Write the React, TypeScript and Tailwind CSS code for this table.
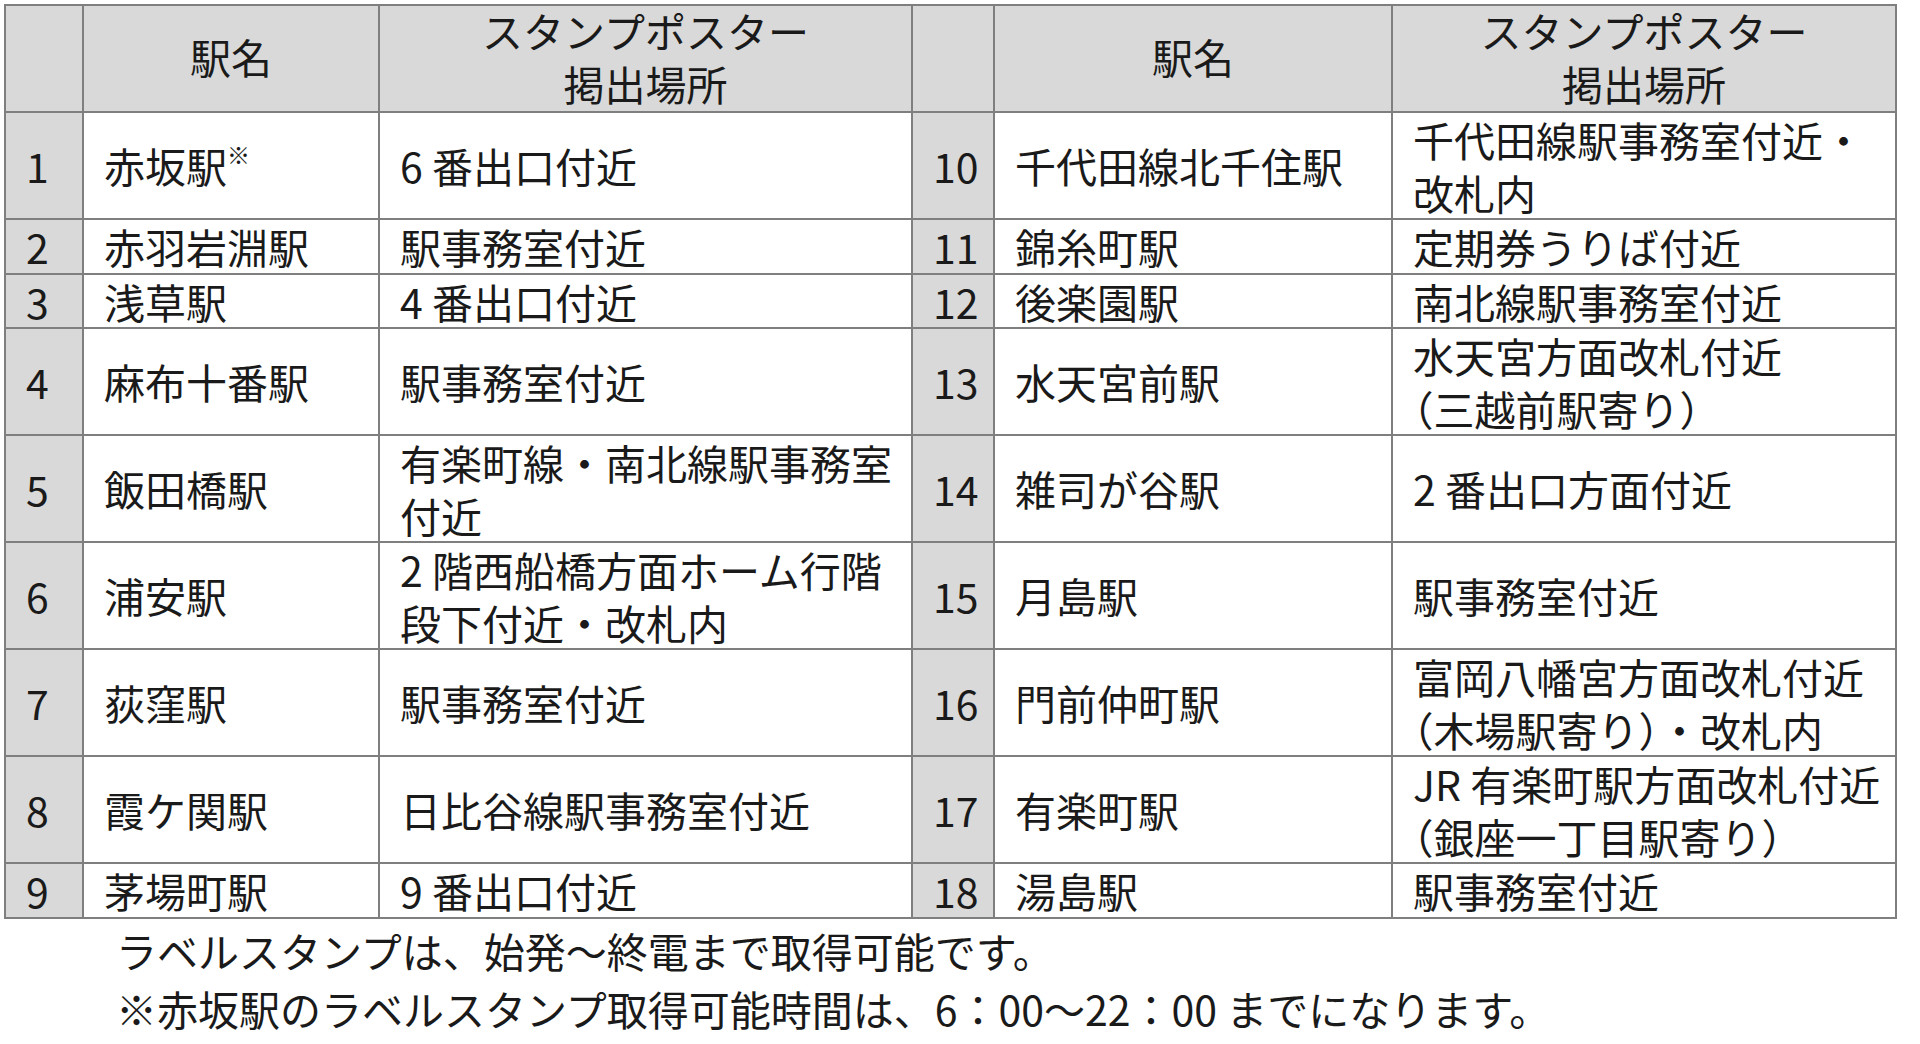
import React from "react";

type Row = {
  n: string;
  name: React.ReactNode;
  place: React.ReactNode;
};

const H = ({ c }: { c: string }) => (
  <span className="[font-feature-settings:'halt']">{c}</span>
);

const left: Row[] = [
  {
    n: "1",
    name: (
      <>
        赤坂駅
        <span className="text-[23px] leading-none align-[19px]">※</span>
      </>
    ),
    place: "6 番出口付近",
  },
  { n: "2", name: "赤羽岩淵駅", place: "駅事務室付近" },
  { n: "3", name: "浅草駅", place: "4 番出口付近" },
  { n: "4", name: "麻布十番駅", place: "駅事務室付近" },
  {
    n: "5",
    name: "飯田橋駅",
    place: (
      <>
        有楽町線・南北線駅事務室
        <br />
        付近
      </>
    ),
  },
  {
    n: "6",
    name: "浦安駅",
    place: (
      <>
        2 階西船橋方面ホーム行階
        <br />
        段下付近・改札内
      </>
    ),
  },
  { n: "7", name: "荻窪駅", place: "駅事務室付近" },
  { n: "8", name: "霞ケ関駅", place: "日比谷線駅事務室付近" },
  { n: "9", name: "茅場町駅", place: "9 番出口付近" },
];

const right: Row[] = [
  {
    n: "10",
    name: "千代田線北千住駅",
    place: (
      <>
        千代田線駅事務室付近・
        <br />
        改札内
      </>
    ),
  },
  { n: "11", name: "錦糸町駅", place: "定期券うりば付近" },
  { n: "12", name: "後楽園駅", place: "南北線駅事務室付近" },
  {
    n: "13",
    name: "水天宮前駅",
    place: (
      <>
        水天宮方面改札付近
        <br />
        <H c="（" />
        三越前駅寄り
        <H c="）" />
      </>
    ),
  },
  { n: "14", name: "雑司が谷駅", place: "2 番出口方面付近" },
  { n: "15", name: "月島駅", place: "駅事務室付近" },
  {
    n: "16",
    name: "門前仲町駅",
    place: (
      <>
        富岡八幡宮方面改札付近
        <br />
        <H c="（" />
        木場駅寄り
        <H c="）" />
        ・改札内
      </>
    ),
  },
  {
    n: "17",
    name: "有楽町駅",
    place: (
      <>
        JR 有楽町駅方面改札付近
        <br />
        <H c="（" />
        銀座一丁目駅寄り
        <H c="）" />
      </>
    ),
  },
  { n: "18", name: "湯島駅", place: "駅事務室付近" },
];

const cell =
  "flex items-center border-r-2 border-b-2 border-[#7f7f7f] pl-[20px] whitespace-nowrap";
const numCell = cell + " bg-[#d9d9d9]";
const headCell =
  "flex items-center justify-center text-center border-r-2 border-b-2 border-[#7f7f7f] bg-[#d9d9d9] whitespace-nowrap";

export default function App() {
  return (
    <div className="min-h-screen bg-white pl-[4px] pt-[4px] text-[41px] leading-[52.5px] text-[#1a1a1a] font-['Noto_Sans_CJK_JP','Noto_Sans',sans-serif]">
      <div className="grid w-max grid-cols-[78px_296px_533px_82px_398px_504px] border-l-2 border-t-2 border-[#7f7f7f]">
        <div className={headCell}></div>
        <div className={headCell}>
          <div className="relative -top-[2px]">駅名</div>
        </div>
        <div className={headCell}>
          <div className="relative -top-[2px]">
            スタンプポスター
            <br />
            掲出場所
          </div>
        </div>
        <div className={headCell}></div>
        <div className={headCell}>
          <div className="relative -top-[2px]">駅名</div>
        </div>
        <div className={headCell}>
          <div className="relative -top-[2px]">
            スタンプポスター
            <br />
            掲出場所
          </div>
        </div>
        {left.map((l, i) => {
          const r = right[i];
          return (
            <React.Fragment key={l.n}>
              <div className={numCell}>{l.n}</div>
              <div className={cell}>
                <div>{l.name}</div>
              </div>
              <div className={cell}>
                <div>{l.place}</div>
              </div>
              <div className={numCell}>{r.n}</div>
              <div className={cell}>
                <div>{r.name}</div>
              </div>
              <div className={cell}>
                <div>{r.place}</div>
              </div>
            </React.Fragment>
          );
        })}
      </div>
      <div className="ml-[112px] mt-[2px] leading-[58px] whitespace-nowrap">
        <p>ラベルスタンプは、始発～終電まで取得可能です。</p>
        <p>※赤坂駅のラベルスタンプ取得可能時間は、6：00～22：00 までになります。</p>
      </div>
    </div>
  );
}
